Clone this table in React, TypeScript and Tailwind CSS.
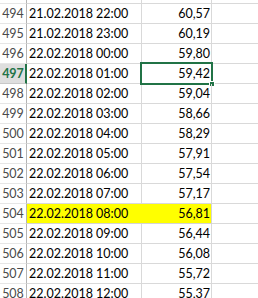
import React from "react";

const rows: [number, string, string][] = [
  [494, "21.02.2018 22:00", "60,57"],
  [495, "21.02.2018 23:00", "60,19"],
  [496, "22.02.2018 00:00", "59,80"],
  [497, "22.02.2018 01:00", "59,42"],
  [498, "22.02.2018 02:00", "59,04"],
  [499, "22.02.2018 03:00", "58,66"],
  [500, "22.02.2018 04:00", "58,29"],
  [501, "22.02.2018 05:00", "57,91"],
  [502, "22.02.2018 06:00", "57,54"],
  [503, "22.02.2018 07:00", "57,17"],
  [504, "22.02.2018 08:00", "56,81"],
  [505, "22.02.2018 09:00", "56,44"],
  [506, "22.02.2018 10:00", "56,08"],
  [507, "22.02.2018 11:00", "55,72"],
  [508, "22.02.2018 12:00", "55,37"],
];

export default function App() {
  return (
    <div
      className="w-[258px] h-[298px] overflow-hidden bg-white text-[12.5px] leading-[19px] text-black"
      style={{ fontFamily: "Lato, 'Liberation Sans', sans-serif" }}
    >
      <div className="flex flex-col">
        <div className="flex h-[4px]">
          <div className="w-[27px] shrink-0 border-b border-[#e6e6e6] border-r border-r-[#b4b4b4]" />
          <div className="w-[115px] shrink-0 border-b border-r border-[#d9d9d9]" />
          <div className="w-[70px] shrink-0 border-b border-r border-[#d9d9d9]" />
          <div className="flex-1 border-b border-[#d9d9d9]" />
        </div>
        {rows.map(([n, d, v]) => {
          const sel = n === 497;
          const yel = n === 504;
          return (
            <div key={n} className="flex h-[20px]">
              <div
                className={
                  sel
                    ? "w-[27px] shrink-0 border-b border-[#c8c8c8] border-r-2 border-r-[#217346] bg-[#dedede] text-[#217346] font-bold text-center pl-[1px]"
                    : "w-[27px] shrink-0 border-b border-[#e6e6e6] border-r border-r-[#b4b4b4] bg-white text-[#4a4a4a] text-center"
                }
              >
                {n}
              </div>
              <div
                className={
                  yel
                    ? "w-[115px] shrink-0 bg-[#ffff00] border-b border-[#d4d4d4] pl-[2px]"
                    : "w-[115px] shrink-0 border-b border-r border-[#d9d9d9] pl-[2px]"
                }
              >
                {d}
              </div>
              <div
                className={
                  yel
                    ? "relative w-[70px] shrink-0 bg-[#ffff00] border-b border-r border-[#d4d4d4] pr-[1px] text-right"
                    : "relative w-[70px] shrink-0 border-b border-r border-[#d9d9d9] pr-[1px] text-right"
                }
              >
                {v}
                {sel && (
                  <>
                    <div className="absolute -top-[2px] -left-[2px] -right-[2px] -bottom-[2px] border-2 border-[#217346]" />
                    <div className="absolute -right-[4px] -bottom-[4px] w-[6px] h-[6px] bg-[#217346] border border-white" />
                  </>
                )}
              </div>
              <div className="flex-1 border-b border-[#d9d9d9]" />
            </div>
          );
        })}
      </div>
    </div>
  );
}
